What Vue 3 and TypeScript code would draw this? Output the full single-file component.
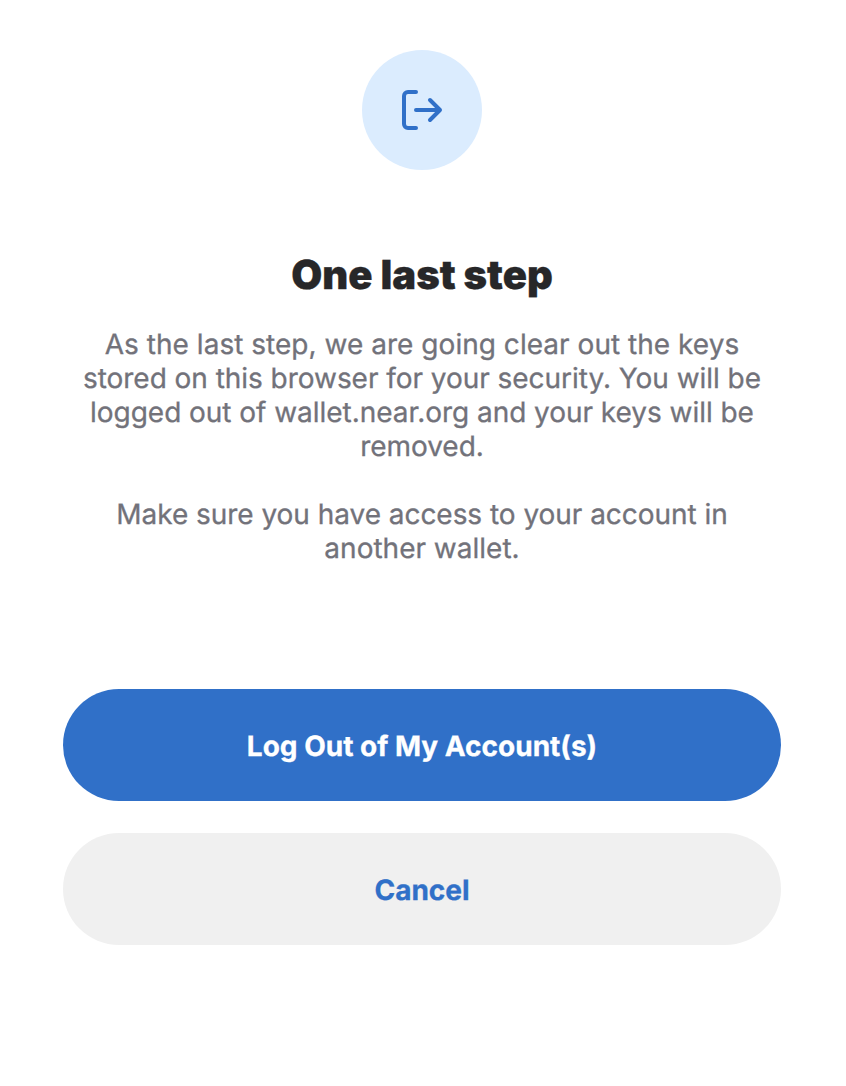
<script setup lang="ts">
interface Line {
  text: string
  fit?: 'wide' | 'tight'
}

const paragraphs: Line[][] = [
  [
    { text: 'As the last step, we are going clear out the keys', fit: 'wide' },
    { text: 'stored on this browser for your security. You will be', fit: 'tight' },
    { text: 'logged out of wallet.near.org and your keys will be', fit: 'tight' },
    { text: 'removed.', fit: 'tight' },
  ],
  [
    { text: 'Make sure you have access to your account in', fit: 'tight' },
    { text: 'another wallet.' },
  ],
]
</script>

<template>
  <main class="dialog">
    <div class="badge">
      <svg width="44" height="44" viewBox="0 0 44 44" fill="none" stroke="#3070c8" stroke-width="4" stroke-linecap="round" stroke-linejoin="round">
        <path d="M16 4H8a4 4 0 0 0-4 4v28a4 4 0 0 0 4 4h8" />
        <path d="M16 22h24M30 12l10 10-10 10" />
      </svg>
    </div>
    <h1 class="title">One last step</h1>
    <div class="copy">
      <p v-for="(lines, i) in paragraphs" :key="i">
        <span v-for="line in lines" :key="line.text" class="line" :class="line.fit">{{ line.text }}</span>
      </p>
    </div>
    <div class="actions">
      <button class="button primary" type="button">Log Out of My Account(s)</button>
      <button class="button secondary" type="button">Cancel</button>
    </div>
  </main>
</template>

<style>
body {
  margin: 0;
  background: #fff;
}
</style>

<style scoped>
.dialog {
  box-sizing: border-box;
  width: 844px;
  height: 1086px;
  padding: 50px 63px 0;
  display: flex;
  flex-direction: column;
  align-items: center;
  font-family: Inter, sans-serif;
  text-rendering: geometricPrecision;
  -webkit-text-stroke-width: 0.3px;
}
.badge {
  width: 120px;
  height: 120px;
  border-radius: 50%;
  background: #dbecfe;
  display: flex;
  align-items: center;
  justify-content: center;
}
.title {
  margin: 80px 0 0;
  font-size: 40px;
  line-height: 50px;
  font-weight: 900;
  color: #272729;
}
.copy {
  margin-top: 27px;
  font-size: 28px;
  line-height: 34px;
  color: #72727a;
  text-align: center;
}
.copy p {
  margin: 0 0 34px;
}
.line {
  display: block;
  white-space: nowrap;
}
.line.wide {
  letter-spacing: 0.03px;
}
.line.tight {
  letter-spacing: -0.04px;
}
.actions {
  margin-top: 90px;
  width: 718px;
  display: flex;
  flex-direction: column;
  gap: 32px;
}
.button {
  height: 112px;
  border: 0;
  border-radius: 56px;
  padding: 2px 0 0;
  font-family: inherit;
  font-size: 28px;
  font-weight: 700;
  text-rendering: inherit;
}
.primary {
  background: #3070c8;
  color: #fff;
}
.secondary {
  background: #f0f0f0;
  color: #3070c8;
}
</style>
